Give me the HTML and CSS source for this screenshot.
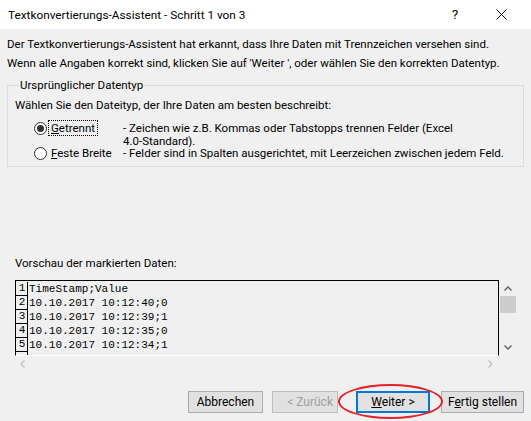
FILE: index.html
```html
<!DOCTYPE html>
<html lang="de">
<head>
<meta charset="utf-8">
<title>Textkonvertierungs-Assistent</title>
<link rel="stylesheet" href="styles.css">
</head>
<body>
<div class="dialog">
  <header class="titlebar">
    <span class="title">Textkonvertierungs-Assistent - Schritt 1 von 3</span>
    <span class="help">?</span>
    <svg class="close" width="11" height="11" viewBox="0 0 11 11" aria-label="Schließen">
      <path d="M0.5 0.5 L10.5 10.5 M10.5 0.5 L0.5 10.5"/>
    </svg>
  </header>

  <main class="content">
    <p class="intro first">Der Textkonvertierungs-Assistent hat erkannt, dass Ihre Daten mit Trennzeichen versehen sind.</p>
    <p class="intro">Wenn alle Angaben korrekt sind, klicken Sie auf 'Weiter ', oder wählen Sie den korrekten Datentyp.</p>

    <section class="group">
      <span class="group-title">Ursprünglicher Datentyp</span>
      <p class="prompt">Wählen Sie den Dateityp, der Ihre Daten am besten beschreibt:</p>
      <div class="options">
        <span class="radio checked"></span>
        <span class="opt-label"><span class="focus"><u>G</u>etrennt</span></span>
        <span class="opt-desc">- Zeichen wie z.B. Kommas oder Tabstopps trennen Felder (Excel<br>4.0-Standard).</span>

        <span class="radio"></span>
        <span class="opt-label"><span class="nofocus"><u>F</u>este Breite</span></span>
        <span class="opt-desc">- Felder sind in Spalten ausgerichtet, mit Leerzeichen zwischen jedem Feld.</span>
      </div>
    </section>

    <p class="preview-label">Vorschau der markierten Daten:</p>

    <div class="preview">
      <div class="sheet">
        <div class="row"><span class="num">1</span><span class="cell">TimeStamp;Value</span></div>
        <div class="row"><span class="num">2</span><span class="cell">10.10.2017 10:12:40;0</span></div>
        <div class="row"><span class="num">3</span><span class="cell">10.10.2017 10:12:39;1</span></div>
        <div class="row"><span class="num">4</span><span class="cell">10.10.2017 10:12:35;0</span></div>
        <div class="row"><span class="num">5</span><span class="cell">10.10.2017 10:12:34;1</span></div>
        <div class="row"><span class="num"></span><span class="cell"></span></div>
      </div>
      <div class="vscroll">
        <svg class="arrow dark" width="8" height="5" viewBox="0 0 8 5"><path d="M0.5 4.5 L4 1 L7.5 4.5"/></svg>
        <span class="thumb"></span>
        <span class="vspacer"></span>
        <svg class="arrow dark" width="8" height="5" viewBox="0 0 8 5"><path d="M0.5 0.5 L4 4 L7.5 0.5"/></svg>
      </div>
      <div class="hscroll">
        <svg class="arrow light" width="5" height="8" viewBox="0 0 5 8"><path d="M4.5 0.5 L1 4 L4.5 7.5"/></svg>
        <svg class="arrow light" width="5" height="8" viewBox="0 0 5 8"><path d="M0.5 0.5 L4 4 L0.5 7.5"/></svg>
      </div>
      <div class="corner"></div>
    </div>

    <div class="buttons">
      <button class="btn btn-cancel">Abbrechen</button>
      <button class="btn btn-back" disabled>&lt; Zurück</button>
      <span class="next-wrap">
        <button class="btn btn-next"><u>W</u>eiter &gt;</button>
        <span class="mark"></span>
      </span>
      <button class="btn btn-finish">F<u>e</u>rtig stellen</button>
    </div>
  </main>
</div>
</body>
</html>
```

FILE: styles.css
```css
html, body {
  margin: 0;
  padding: 0;
}

body {
  width: 531px;
  height: 421px;
  overflow: hidden;
  background: #f0f0f0;
  color: #000;
  font-family: Roboto, "Noto Sans", sans-serif;
  font-size: 11.5px;
}

p {
  margin: 0;
  white-space: nowrap;
}

/* ---------- title bar ---------- */
.titlebar {
  height: 29px;
  background: #fff;
  display: flex;
  align-items: center;
  padding-left: 8px;
}

.title {
  flex: 1;
  font-size: 11.8px;
  line-height: 18px;
  white-space: nowrap;
}

.help {
  width: 20px;
  text-align: center;
  font-size: 13px;
  margin-right: 31px;
}

.close {
  margin-right: 24px;
  stroke: #000;
  stroke-width: 1;
  fill: none;
}

/* ---------- content ---------- */
.content {
  padding: 0 7px;
}

.intro {
  line-height: 19px;
}

.intro.first {
  margin-top: 6px;
}

/* group box with its caption sitting on the top border */
.group {
  margin-top: 12px;
  padding: 0 7px 5.5px 7px;
  border: 1px solid #dcdcdc;
}

.group-title {
  display: table;
  margin: -10px 0 0 4px;
  padding: 0 1px;
  line-height: 18px;
  background: #f0f0f0;
}

.prompt {
  line-height: 18px;
  margin-top: 2px;
}

.options {
  display: grid;
  grid-template-columns: 13px 74px auto;
  column-gap: 1px;
  padding-left: 19px;
  margin-top: 8px;
  line-height: 12.5px;
  align-items: start;
  white-space: nowrap;
}

.radio {
  box-sizing: border-box;
  width: 13px;
  height: 13px;
  border: 1px solid #333;
  border-radius: 50%;
  background: #fff;
  display: flex;
  align-items: center;
  justify-content: center;
}

.radio.checked::after {
  content: "";
  width: 7px;
  height: 7px;
  border-radius: 50%;
  background: #333;
}

.focus {
  border: 1px dotted #000;
  padding: 0 2px;
}

.nofocus {
  border: 1px solid transparent;
  padding: 0 2px;
}

/* preview */
.preview-label {
  line-height: 18px;
  margin: 87px 0 0 8px;
}

.preview {
  margin: 8px 0 0 8px;
  width: 501px;
  display: grid;
  grid-template-columns: 484px 17px;
  grid-template-rows: 76px 16px;
}

.sheet {
  box-sizing: border-box;
  border-top: 1px solid #000;
  border-left: 1px solid #000;
  border-right: 1px solid #000;
  border-bottom: 1px solid #fff;
  padding-top: 1px;
  overflow: hidden;
  font-family: "Liberation Mono", "Courier New", monospace;
  font-size: 11px;
}

.row {
  display: flex;
  height: 14px;
  line-height: 14px;
}

.num {
  box-sizing: border-box;
  width: 12px;
  border-right: 1px solid #000;
  border-bottom: 1px solid #000;
  text-align: center;
  line-height: 13px;
  padding-left: 1px;
}

.cell {
  padding-left: 1px;
  white-space: pre;
}

.vscroll {
  display: flex;
  flex-direction: column;
  align-items: center;
}

.vscroll .arrow:first-child {
  margin-top: 6px;
  margin-bottom: 5px;
}

.vscroll .arrow:last-child {
  margin-bottom: 6px;
}

.thumb {
  width: 16px;
  height: 17px;
  margin-left: 1px;
  background: #cdcdcd;
}

.vspacer {
  flex: 1;
}

.arrow {
  fill: none;
  stroke-width: 1.4;
}

.arrow.dark {
  stroke: #606060;
}

.arrow.light {
  stroke: #c2c2c2;
}

.hscroll {
  display: flex;
  align-items: center;
  justify-content: space-between;
  padding: 0 6px 0 5px;
}

/* buttons */
.buttons {
  margin-top: 19px;
  display: flex;
  justify-content: flex-end;
  align-items: center;
}

.btn {
  box-sizing: border-box;
  height: 22px;
  padding: 0;
  margin: 0;
  font-family: inherit;
  font-size: 12px;
  color: #000;
  background: #e1e1e1;
  border: 1px solid #adadad;
  border-radius: 0;
  line-height: 18px;
}

.btn-cancel {
  width: 75px;
}

.btn-back {
  width: 66px;
  margin-left: 9px;
  text-align: right;
  padding-right: 4px;
  color: #a0a0a0;
  background: #e1e1e1;
  border-color: #bfbfbf;
}

.next-wrap {
  position: relative;
  display: flex;
  margin-left: 18px;
}

.btn-next {
  width: 74px;
  border: 2px solid #0078d7;
}

.mark {
  position: absolute;
  left: -18px;
  top: -7px;
  width: 105px;
  height: 35px;
  box-sizing: border-box;
  border: 2px solid #e2232a;
  border-radius: 50%;
  pointer-events: none;
}

.btn-finish {
  width: 83px;
  margin-left: 11px;
}
```
